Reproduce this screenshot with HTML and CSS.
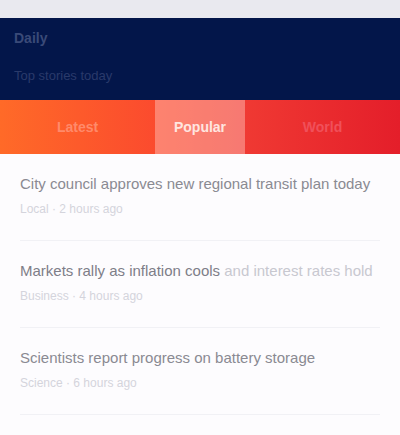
FILE: index.html
```html
<!DOCTYPE html>
<html>
<head>
<meta charset="utf-8">
<link rel="stylesheet" href="styles.css">
</head>
<body>
<div class="topbar"></div>
<header class="hero">
  <div class="brand">Daily</div>
  <div class="sub">Top stories today</div>
</header>
<nav class="tabs">
  <div class="tab">Latest</div>
  <div class="tab active">Popular</div>
  <div class="tab">World</div>
</nav>
<main class="list">
  <article class="item">
    <h2 class="title">City council approves new regional transit plan today</h2>
    <p class="meta">Local · 2 hours ago</p>
  </article>
  <article class="item">
    <h2 class="title"><span class="strong">Markets rally as inflation cools</span> <span class="soft">and interest rates hold</span></h2>
    <p class="meta">Business · 4 hours ago</p>
  </article>
  <article class="item">
    <h2 class="title">Scientists report progress on battery storage</h2>
    <p class="meta">Science · 6 hours ago</p>
  </article>
</main>
</body>
</html>
```
FILE: styles.css
```css
* { box-sizing: border-box; }
body {
  margin: 0;
  font-family: "Liberation Sans", Arial, sans-serif;
  background: #fdfcfe;
  width: 400px;
  overflow: hidden;
}
.topbar {
  height: 18px;
  background: #e9e9ef;
}
.hero {
  height: 82px;
  background: #03164a;
  padding: 12px 14px 0;
  display: flex;
  flex-direction: column;
  gap: 22px;
}
.brand {
  color: #3a4a78;
  font-size: 14px;
  font-weight: bold;
}
.sub {
  color: #2a3a6a;
  font-size: 13px;
}
.tabs {
  height: 54px;
  display: flex;
  align-items: stretch;
  background: linear-gradient(90deg, #ff6a28 0%, #fb4a2e 40%, #f03a33 60%, #e41e2a 100%);
}
.tab {
  flex: 1;
  display: flex;
  align-items: center;
  justify-content: center;
  color: #ff8a6a;
  font-size: 14px;
  font-weight: bold;
}
.tab:last-child { color: #f0505a; }
.tab.active {
  background: rgba(255, 200, 190, 0.45);
  color: #ffe6e0;
  flex: 0 0 90px;
}
.list {
  padding: 0 20px;
}
.item {
  padding: 20px 0 24px;
  border-bottom: 1px solid #f1f1f5;
}
.title {
  margin: 0 0 8px;
  font-size: 15px;
  font-weight: normal;
  color: #8a8a92;
  line-height: 20px;
}
.strong { color: #7e7e88; }
.soft { color: #c8c8d0; }
.meta {
  margin: 0;
  font-size: 12px;
  color: #d4d4dc;
}
```
